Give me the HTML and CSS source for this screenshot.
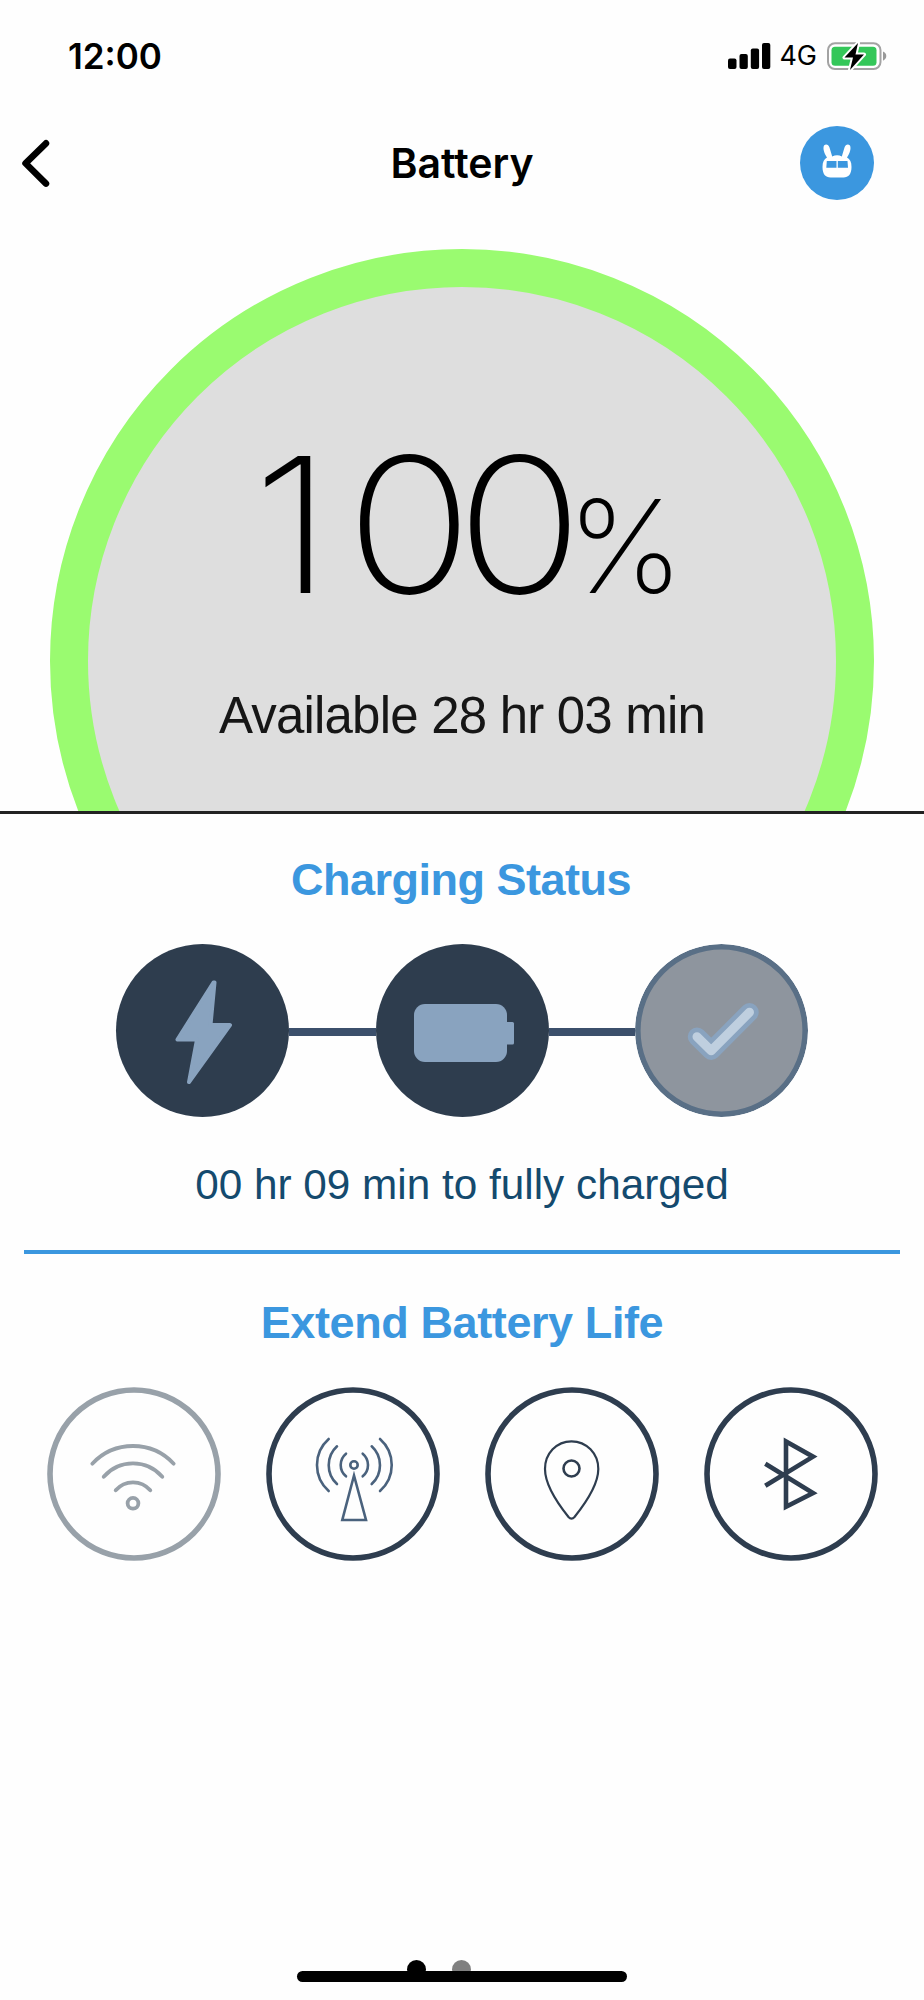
FILE: index.html
```html
<!DOCTYPE html>
<html lang="en">
<head>
  <meta charset="UTF-8">
  <title>Battery</title>
  <link rel="stylesheet" href="styles.css">
</head>
<body>

  <!-- Phone status bar -->
  <div class="status-bar">
    <span class="clock">12:00</span>
    <div class="status-icons">
      <svg class="signal" width="43" height="26" viewBox="0 0 43 26">
        <rect x="0" y="15.5" width="8.5" height="10.5" rx="2"/>
        <rect x="11.5" y="11" width="8.3" height="15" rx="2"/>
        <rect x="22.8" y="5.5" width="8.3" height="20.5" rx="2"/>
        <rect x="34" y="0" width="8.3" height="26" rx="2"/>
      </svg>
      <span class="network">4G</span>
      <svg class="battery" width="60" height="32" viewBox="0 0 60 32">
        <rect x="1" y="3.2" width="52.5" height="25.8" rx="7" fill="#fff" stroke="#a3a3a3" stroke-width="2"/>
        <rect x="4.5" y="6.7" width="45" height="19" rx="3.5" fill="#34c759"/>
        <path d="M56 11.5c2 .8 3.3 2.5 3.3 4.6s-1.3 3.8-3.3 4.6z" fill="#999"/>
        <path d="M31 3L17.5 17.5h8.500L23 30L37 14.500h-8.500z" fill="#000" stroke="#fff" stroke-width="4" stroke-linejoin="round" paint-order="stroke"/>
      </svg>
    </div>
  </div>

  <!-- Page header -->
  <div class="header">
    <svg class="back" width="32" height="52" viewBox="0 0 32 52">
      <path d="M26 6.3L5.5 26.3L26 46.6"/>
    </svg>
    <h1>Battery</h1>
    <svg class="avatar" width="74" height="74" viewBox="0 0 74 74">
      <circle cx="37" cy="37" r="37" fill="#3b97df"/>
      <path d="M24 19.500c2-2 4.500-1 5.500 2l2.700 9q5-2.500 9.600 0l2.700-9c1-3 3.500-4 5.500-2 1.500 3-.5 8.500-3 12 3 1.500 4.500 4.500 4.500 9.500 0 7-3 10.500-8 10.500h-13c-5 0-8-3.500-8-10.500 0-5 1.500-8 4.500-9.500-2.500-3.500-4.500-9-3-12z" fill="#fff"/>
      <path d="M26.800 35h9.700v6.800h-10.200zM37.800 35h9.700l.5 6.800h-10.200z" fill="#3b97df"/>
    </svg>
  </div>

  <!-- Charge level -->
  <div class="gauge-area">
    <div class="gauge">
      <div class="level"><span class="number"><span class="hundreds">1</span>00</span><span class="percent">%</span></div>
      <div class="available">Available 28 hr 03 min</div>
    </div>
  </div>

  <!-- Charging status -->
  <div class="charging">
    <h2>Charging Status</h2>
    <div class="steps">
      <svg class="step" viewBox="0 0 173 173">
        <path d="M97.5 38.5L61.5 95.5H81L73 138L114 81H94.500L98.500 38.500z" fill="#89a3bf" stroke="#89a3bf" stroke-width="4" stroke-linejoin="round"/>
      </svg>
      <div class="link"></div>
      <svg class="step" viewBox="0 0 173 173">
        <rect x="38" y="60" width="93" height="58" rx="11" fill="#89a3bf"/>
        <rect x="128.500" y="78" width="9.500" height="22.500" rx="1.500" fill="#89a3bf"/>
      </svg>
      <div class="link"></div>
      <svg class="step pending" viewBox="0 0 173 173">
        <circle cx="86.500" cy="86.500" r="83.700" fill="#8e959e" stroke="#596f86" stroke-width="5.600"/>
        <path class="tick" d="M62 92.700L76.200 106.700L114.500 68.300" stroke="#89a3bf" stroke-width="18.500"/>
        <path class="tick" d="M62 92.700L76.200 106.700L114.500 68.300" stroke="#bfcfdf" stroke-width="9"/>
      </svg>
    </div>
    <p class="remaining">00 hr 09 min to fully charged</p>
  </div>

  <!-- Battery saving toggles -->
  <div class="extend">
    <h2>Extend Battery Life</h2>
    <div class="toggles">
      <svg class="toggle off" viewBox="0 0 174 174">
        <circle cx="87" cy="87" r="84"/>
        <g stroke-width="3.800">
          <path d="M45.300 76.700A55.600 55.600 0 0 1 126.700 76.700"/>
          <path d="M56.700 89.700A38.700 38.700 0 0 1 115.300 89.700"/>
          <path d="M68.700 103.300A22.700 22.700 0 0 1 103.300 103.300"/>
          <circle cx="86" cy="116.300" r="5.400"/>
        </g>
      </svg>
      <svg class="toggle" viewBox="0 0 174 174">
        <circle cx="87" cy="87" r="84"/>
        <g stroke="#4a627d" stroke-width="2.600">
          <path d="M96.700 66.700a14.700 14.700 0 0 1 0 22.600M105.700 59.300a25.600 25.600 0 0 1 0 37.700M114 52a34.700 34.700 0 0 1 0 52"/>
          <path d="M80 66.700a14.700 14.700 0 0 0 0 22.600M71 59.300a25.600 25.600 0 0 0 0 37.700M62.700 52a34.700 34.700 0 0 0 0 52"/>
          <circle cx="88" cy="78" r="3.700"/>
          <path d="M88 88.500L76.300 133H100z" stroke-linejoin="miter"/>
        </g>
      </svg>
      <svg class="toggle" viewBox="0 0 174 174">
        <circle cx="87" cy="87" r="84"/>
        <g stroke-width="2.200">
          <path d="M86.500 54.300C71.500 54.300 60 66.500 60 82C60 97 71.500 115 83.500 130Q86.500 133.300 89.500 130C101.500 115 113.300 97 113.300 82C113.300 66.500 101.500 54.300 86.500 54.300z"/>
          <circle cx="86.500" cy="81.500" r="8" stroke-width="2.600"/>
        </g>
      </svg>
      <svg class="toggle" viewBox="0 0 174 174">
        <circle cx="87" cy="87" r="84"/>
        <path class="bluetooth" d="M61.300 76.700L109 106L82 119.700V54.500L109 69.700L61.300 98.700"/>
      </svg>
    </div>
  </div>

  <!-- Pager and home indicator -->
  <div class="footer">
    <div class="dots">
      <span class="dot active"></span>
      <span class="dot"></span>
    </div>
    <div class="home-bar"></div>
  </div>

</body>
</html>
```
FILE: styles.css
```css
* {
  box-sizing: border-box;
}

body {
  margin: 0;
  width: 924px;
  height: 2000px;
  display: flex;
  flex-direction: column;
  background-color: #fefefe;
  font-family: "Liberation Sans", Arial, sans-serif;
  overflow: hidden;
}

h1, h2, p {
  margin: 0;
}

svg {
  display: block;
  flex-shrink: 0;
}

/* Status bar */
.status-bar {
  display: flex;
  justify-content: space-between;
  align-items: center;
  height: 111px;
  padding: 0 37px 0 68px;
  font-family: Inter, sans-serif;
}

.clock {
  font-size: 35px;
  font-weight: 600;
}

.status-icons {
  display: flex;
  align-items: center;
}

.network {
  margin: 0 10px 0 8px;
  font-size: 27px;
}

/* Header */
.header {
  display: grid;
  grid-template-columns: 74px auto 74px;
  justify-content: space-between;
  align-items: center;
  height: 104px;
  padding: 0 50px 0 20px;
}

.header h1 {
  margin-right: -30px;
  font-family: Inter, sans-serif;
  font-size: 41px;
  font-weight: 600;
}

.back path {
  fill: none;
  stroke: #000;
  stroke-width: 6.5;
  stroke-linecap: round;
  stroke-linejoin: round;
}

/* Gauge */
.gauge-area {
  height: 599px;
  padding-top: 34px;
  display: flex;
  justify-content: center;
  border-bottom: 3px solid #222;
  overflow: hidden;
}

.gauge {
  width: 824px;
  height: 824px;
  flex-shrink: 0;
  border: 38px solid #9afb70;
  border-radius: 50%;
  background-color: #dedede;
  text-align: center;
}

.level {
  display: flex;
  justify-content: center;
  align-items: baseline;
  margin-top: 123px;
  padding-left: 28px;
  height: 230px;
  line-height: 230px;
  font-family: Inter, sans-serif;
  font-weight: 200;
  white-space: nowrap;
}

.number {
  font-size: 188px;
  font-weight: 180;
  letter-spacing: -15px;
  transform: scaleX(1.12);
}

.hundreds {
  letter-spacing: 12px;
}

.percent {
  margin-left: 19px;
  font-size: 129px;
  transform: scaleX(1.02);
}

.available {
  margin-top: 46px;
  font-size: 51px;
  line-height: 60px;
  letter-spacing: -0.8px;
  color: #161616;
}

/* Charging status */
.charging {
  height: 440px;
  margin: 0 24px;
  border-bottom: 4px solid #3b97df;
}

h2 {
  font-size: 45px;
  line-height: 50px;
  letter-spacing: -0.4px;
  color: #3b97df;
  text-align: center;
}

.charging h2 {
  padding: 41px 2px 0 0;
  letter-spacing: -0.5px;
}

.steps {
  display: flex;
  justify-content: center;
  align-items: center;
  margin-top: 39px;
}

.step {
  width: 173px;
  height: 173px;
  border-radius: 50%;
  background-color: #2e3d4e;
}

.pending {
  background: none;
}

.tick {
  fill: none;
  stroke-linecap: round;
  stroke-linejoin: round;
}

.link {
  width: 86.5px;
  height: 8px;
  margin-top: 2px;
  background-color: #3b4f6b;
}

.remaining {
  margin-top: 43px;
  font-size: 42.3px;
  line-height: 50px;
  color: #144a6e;
  text-align: center;
}

/* Toggles */
.extend h2 {
  padding-top: 44px;
}

.toggles {
  display: flex;
  justify-content: space-between;
  margin-top: 39px;
  padding: 0 46px 0 47px;
}

.toggle {
  width: 174px;
  height: 174px;
  fill: none;
  stroke: #2e3d4f;
  stroke-width: 5.6;
  stroke-linecap: round;
}

.off {
  stroke: #98a1a9;
}

.bluetooth {
  stroke-width: 4.6;
  stroke-linecap: butt;
}

/* Footer */
.footer {
  margin-top: auto;
  padding-bottom: 18px;
}

.dots {
  display: flex;
  justify-content: center;
  gap: 26px;
  height: 11px;
  padding-right: 46px;
}

.dot {
  width: 19px;
  height: 19px;
  border-radius: 50%;
  background-color: #808080;
}

.active {
  background-color: #000;
}

.home-bar {
  position: relative;
  width: 330px;
  height: 11px;
  margin: 0 auto;
  border-radius: 6px;
  background-color: #000;
}
```
